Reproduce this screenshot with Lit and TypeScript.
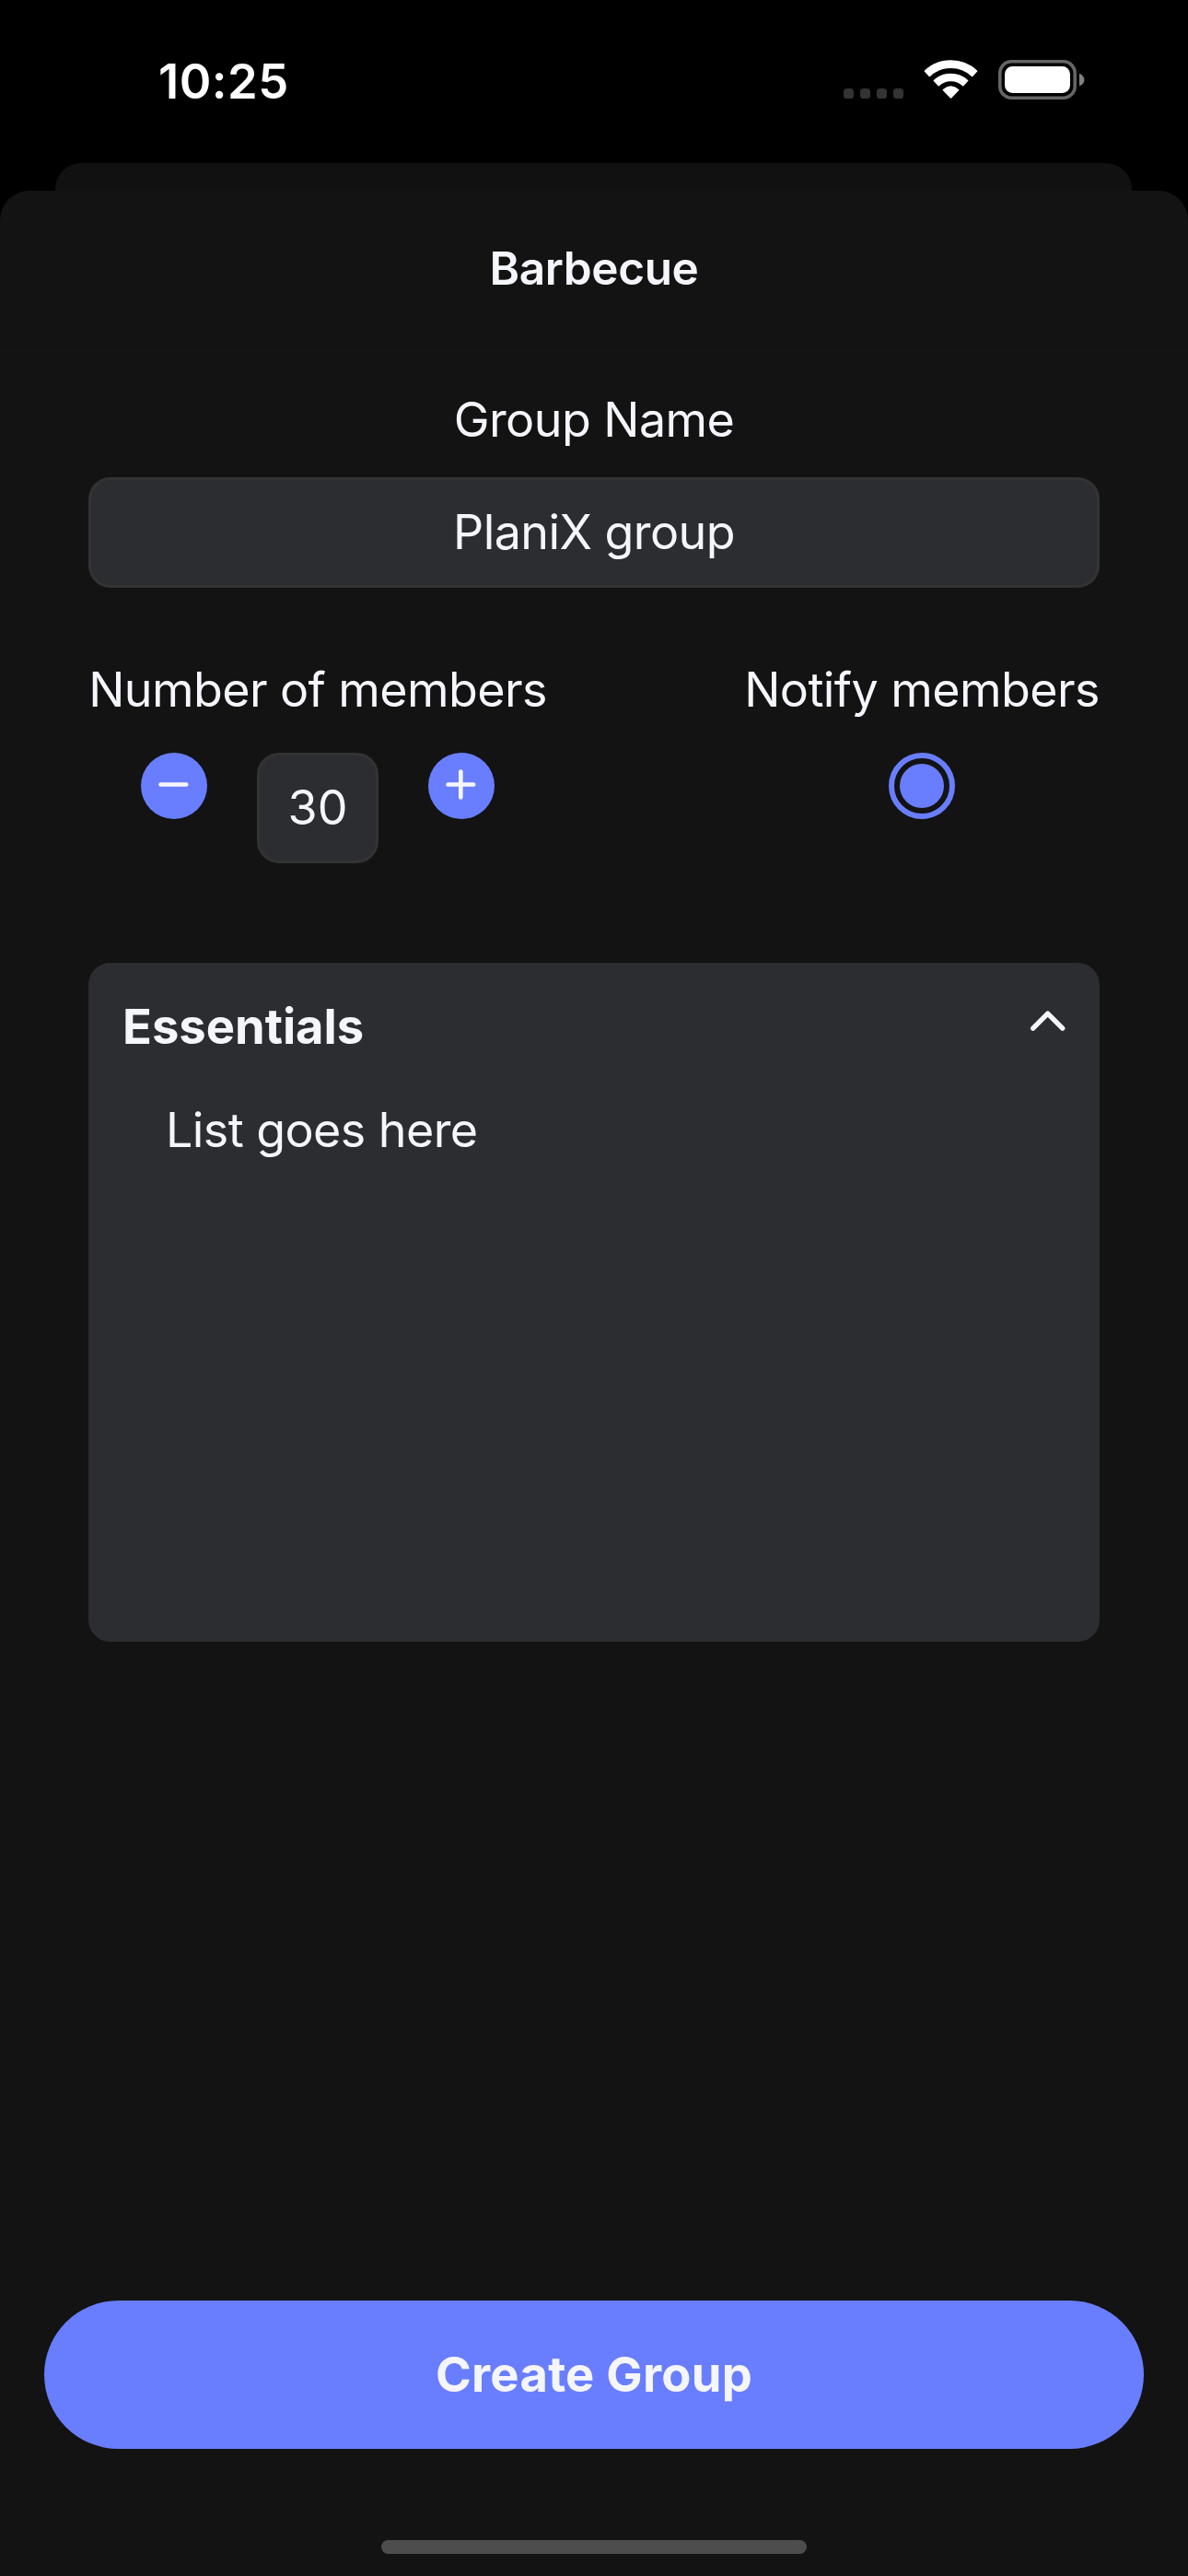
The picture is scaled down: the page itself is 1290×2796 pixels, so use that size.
import { LitElement, html, css } from "lit";
import { customElement, property, state } from "lit/decorators.js";

@customElement("status-bar")
export class StatusBar extends LitElement {
  @property() time = "";

  static styles = css`
    :host {
      display: flex;
      justify-content: space-between;
      align-items: flex-start;
      box-sizing: border-box;
      height: 177px;
      padding: 56px 112px 0 172px;
      color: #fff;
    }
    .time {
      font-size: 52.5px;
      line-height: 64px;
      font-weight: 600;
      letter-spacing: 0.5px;
    }
    .indicators {
      display: block;
      margin-top: 9px;
    }
  `;

  render() {
    return html`
      <span class="time">${this.time}</span>
      <svg class="indicators" width="262" height="43" viewBox="0 0 262 43">
        <g fill="#333">
          <rect x="0" y="31" width="11" height="11" rx="3.6" />
          <rect x="18" y="31" width="11" height="11" rx="3.6" />
          <rect x="36" y="31" width="11" height="11" rx="3.6" />
          <rect x="54" y="31" width="11" height="11" rx="3.6" />
        </g>
        <g
          transform="translate(116.5 42.2)"
          fill="#fff"
          stroke="#fff"
          stroke-width="1.6"
          stroke-linejoin="round"
        >
          <path d="M-28 -30.1A41.2 41.2 0 0 1 28 -30.1L23.1 -24.8A33.9 33.9 0 0 0 -23.1 -24.8Z" />
          <path d="M-18.1 -19.7A26.8 26.8 0 0 1 18.1 -19.7L13.2 -14.6A19.7 19.7 0 0 0 -13.2 -14.6Z" />
          <path d="M-8 -9.6Q0 -16.6 8 -9.6L0 -1.2Z" />
        </g>
        <rect x="169.8" y="1.8" width="81.4" height="39.4" rx="12.5" fill="none" stroke="#666" stroke-width="3.6" />
        <rect x="175" y="7" width="71" height="29" rx="8.5" fill="#fff" />
        <path d="M256 14.8Q261.4 17.2 261.4 21.7Q261.4 26.2 256 28.6Z" fill="#808080" />
      </svg>
    `;
  }
}

@customElement("member-stepper")
export class MemberStepper extends LitElement {
  @property({ type: Number }) value = 0;

  static styles = css`
    :host {
      display: flex;
      align-items: flex-start;
      gap: 54px;
    }
    .step {
      display: block;
      width: 72px;
      height: 72px;
      padding: 0;
      border: 0;
      border-radius: 50%;
      background: #697eff;
    }
    .step svg {
      display: block;
    }
    .value {
      box-sizing: border-box;
      width: 132px;
      height: 120px;
      border: 3px solid #333;
      border-radius: 24px;
      background: #2c2d31;
      text-align: center;
      font-size: 52px;
      line-height: 114px;
      letter-spacing: 0;
    }
  `;

  private change(by: number) {
    this.dispatchEvent(new CustomEvent("step", { detail: by }));
  }

  render() {
    return html`
      <button class="step" aria-label="Fewer" @click=${() => this.change(-1)}>
        <svg width="72" height="72" viewBox="0 0 72 72" stroke="#f5f6fc" stroke-width="4.6" stroke-linecap="round">
          <path d="M21.5 34.5H49.2" />
        </svg>
      </button>
      <div class="value">${this.value}</div>
      <button class="step" aria-label="More" @click=${() => this.change(1)}>
        <svg width="72" height="72" viewBox="0 0 72 72" stroke="#f5f6fc" stroke-width="4.6" stroke-linecap="round">
          <path d="M21.5 34.5H49.2M35.3 20.6V48.4" />
        </svg>
      </button>
    `;
  }
}

@customElement("app-root")
export class AppRoot extends LitElement {
  @state() private members = 30;
  @state() private notify = true;

  static styles = css`
    :host {
      display: flex;
      flex-direction: column;
      width: 1290px;
      height: 2796px;
      overflow: hidden;
      background: #000;
      color: #f5f6fc;
      font-family: Inter, "Liberation Sans", sans-serif;
      font-size: 52px;
      line-height: 64px;
      letter-spacing: -0.58px;
    }
    .back-sheet {
      height: 30px;
      margin: 0 61px 0 60px;
      border-radius: 28px 28px 0 0;
      background: #111;
    }
    .sheet {
      flex: 1;
      display: flex;
      flex-direction: column;
      border-radius: 32px 32px 0 0;
      background: #131313;
    }
    .title {
      margin: 0;
      height: 168px;
      border-bottom: 1px solid #101010;
      text-align: center;
      font-size: 49.5px;
      line-height: 168px;
      font-weight: 600;
      letter-spacing: -0.4px;
    }
    .form {
      flex: 1;
      display: flex;
      flex-direction: column;
      padding: 48px 96px 0;
    }
    .name-label {
      text-align: center;
      letter-spacing: -0.55px;
    }
    .name-input {
      box-sizing: border-box;
      height: 120px;
      margin-top: 30px;
      border: 3px solid #333;
      border-radius: 24px;
      background: #2c2d31;
      text-align: center;
      line-height: 114px;
    }
    .options {
      display: flex;
      justify-content: space-between;
      margin-top: 79px;
      height: 220px;
    }
    .option {
      display: flex;
      flex-direction: column;
      align-items: center;
      gap: 36px;
      width: 386px;
      white-space: nowrap;
    }
    .option.count {
      width: 498px;
    }
    .radio {
      box-sizing: border-box;
      display: grid;
      place-items: center;
      width: 72px;
      height: 72px;
      padding: 0;
      border: 6px solid #697eff;
      border-radius: 50%;
      background: none;
    }
    .radio-dot {
      width: 48px;
      height: 48px;
      border-radius: 50%;
      background: #697eff;
    }
    .card {
      box-sizing: border-box;
      height: 737px;
      margin-top: 108px;
      padding: 37px 36px;
      border-radius: 24px;
      background: #2c2d31;
    }
    .card-head {
      display: flex;
      justify-content: space-between;
      align-items: flex-start;
      padding-left: 1px;
      font-size: 52.5px;
      font-weight: 700;
      letter-spacing: 0;
    }
    .chevron {
      display: block;
      margin-top: 15px;
    }
    .card-body {
      padding: 49px 48px 0;
    }
    .footer {
      display: flex;
      flex-direction: column;
      align-items: center;
      gap: 99px;
      padding: 0 48px 24px;
    }
    .submit {
      width: 100%;
      height: 161px;
      padding: 0;
      border: 0;
      border-radius: 81px;
      background: #697eff;
      color: inherit;
      font: inherit;
      font-size: 52.5px;
      font-weight: 650;
      letter-spacing: 0.25px;
      line-height: 161px;
    }
    .home-indicator {
      width: 462px;
      height: 15px;
      border-radius: 8px;
      background: #4d4d4d;
    }
  `;

  render() {
    return html`
      <status-bar time="10:25"></status-bar>
      <div class="back-sheet"></div>
      <main class="sheet">
        <h1 class="title">Barbecue</h1>
        <div class="form">
          <div class="name-label">Group Name</div>
          <div class="name-input">PlaniX group</div>
          <div class="options">
            <div class="option count">
              <span>Number of members</span>
              <member-stepper
                .value=${this.members}
                @step=${(e: CustomEvent<number>) => (this.members += e.detail)}
              ></member-stepper>
            </div>
            <div class="option">
              <span>Notify members</span>
              <button class="radio" aria-label="Notify" @click=${() => (this.notify = !this.notify)}>
                ${this.notify ? html`<span class="radio-dot"></span>` : null}
              </button>
            </div>
          </div>
          <section class="card">
            <div class="card-head">
              <span>Essentials</span>
              <svg class="chevron" width="40" height="24" viewBox="0 0 40 24" fill="none" stroke="#f5f6fc"
                stroke-width="5.4" stroke-linecap="round" stroke-linejoin="round">
                <path d="M3.7 19.2L19.7 3.2L35.7 19.2" />
              </svg>
            </div>
            <div class="card-body">List goes here</div>
          </section>
        </div>
        <div class="footer">
          <button class="submit">Create Group</button>
          <div class="home-indicator"></div>
        </div>
      </main>
    `;
  }
}
